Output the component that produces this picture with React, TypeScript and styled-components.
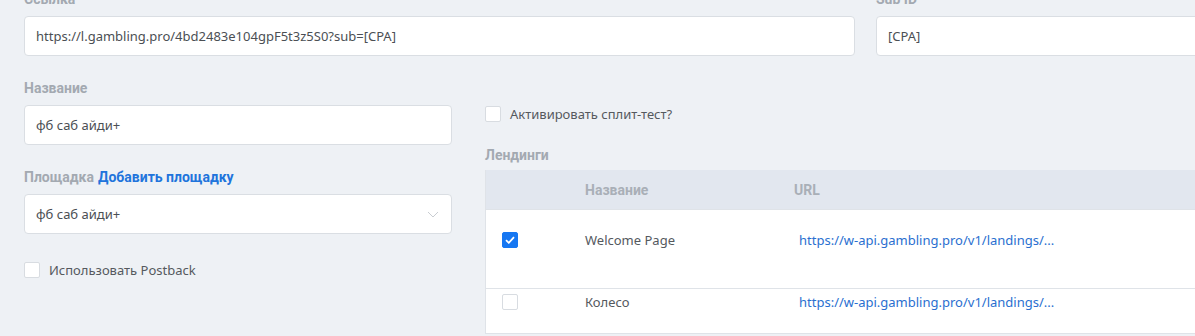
import React from 'react'
import styled, { createGlobalStyle } from 'styled-components'

const GlobalStyle = createGlobalStyle`
  html, body {
    margin: 0;
    padding: 0;
    background: #eef1f5;
    overflow: hidden;
  }
  body {
    font-family: 'Segoe UI', 'Noto Sans', 'Open Sans', sans-serif;
    color: #4b4f54;
  }
`

const Page = styled.div`
  width: 1260px;
  margin-top: -10px;
  padding-left: 24px;
  display: flex;
  flex-direction: column;
  gap: 23px;
`

const TopRow = styled.div`
  display: grid;
  grid-template-columns: 831px 360px;
  column-gap: 21px;
`

const Columns = styled.div`
  display: grid;
  grid-template-columns: 428px 760px;
  column-gap: 33px;
`

const Column = styled.div<{ $offset?: number }>`
  display: flex;
  flex-direction: column;
  padding-top: ${({ $offset }) => $offset || 0}px;
`

const Field = styled.div<{ $gap?: number }>`
  display: flex;
  flex-direction: column;
  margin-bottom: ${({ $gap }) => ($gap === undefined ? 23 : $gap)}px;
`

const Label = styled.div<{ $space?: number }>`
  font-family: Roboto, 'Liberation Sans', sans-serif;
  font-weight: 700;
  font-size: 14px;
  line-height: 18px;
  height: 18px;
  display: flex;
  gap: 4px;
  align-items: center;
  color: #a3a9b1;
  margin-bottom: ${({ $space }) => ($space === undefined ? 8 : $space)}px;
  white-space: nowrap;

  a {
    color: #2174dc;
    text-decoration: none;
  }
`

const Input = styled.div`
  box-sizing: border-box;
  height: 40px;
  background: #fff;
  border: 1px solid #dadee3;
  border-radius: 4px;
  display: flex;
  align-items: center;
  padding: 0 11px;
  font-size: 13px;
  color: #4b4f54;
  white-space: nowrap;
  overflow: hidden;
`

const Select = styled(Input)`
  justify-content: space-between;
  padding-right: 12px;
`

const CheckRow = styled.label`
  display: flex;
  align-items: center;
  gap: 9px;
  font-size: 13px;
  line-height: 18px;
  color: #55595e;
`

const Box = styled.span<{ $checked?: boolean }>`
  width: 16px;
  height: 16px;
  box-sizing: border-box;
  border-radius: 2px;
  flex: none;
  display: inline-flex;
  align-items: center;
  justify-content: center;
  background: ${({ $checked }) => ($checked ? '#1677f2' : '#fff')};
  border: 1px solid ${({ $checked }) => ($checked ? '#1677f2' : '#d8dce1')};
`

const Table = styled.div`
  margin-top: -2px;
  border-left: 1px solid #dfe3e8;
  background: #fff;
`

const Row = styled.div<{ $head?: boolean; $height: number; $top: number }>`
  display: grid;
  grid-template-columns: 83px 209px 1fr;
  align-items: start;
  box-sizing: border-box;
  height: ${({ $height }) => $height}px;
  padding: ${({ $top }) => $top}px 0 0 16px;
  background: ${({ $head }) => ($head ? '#e2e7ef' : '#fff')};
  border-bottom: 1px solid #dfe3e8;
  font-size: 13px;
  line-height: 16px;
`

const HeadCell = styled.div`
  font-family: Roboto, 'Liberation Sans', sans-serif;
  font-weight: 700;
  font-size: 14px;
  color: #a9afb7;
`

const Cell = styled.div`
  color: #55595e;
  white-space: nowrap;
`

const UrlCell = styled.a`
  color: #2a6fd0;
  text-decoration: none;
  white-space: nowrap;
  margin-left: 5px;
`

const Check = () => (
  <svg width="10" height="8" viewBox="0 0 10 8">
    <path d="M1 4.2 L3.8 6.8 L9 1.2" fill="none" stroke="#fff" strokeWidth="1.8" />
  </svg>
)

const Chevron = () => (
  <svg width="12" height="7" viewBox="0 0 12 7">
    <path d="M1 1 L6 6 L11 1" fill="none" stroke="#c9cdd2" strokeWidth="1" />
  </svg>
)

const landings = [
  { name: 'Welcome Page', url: 'https://w-api.gambling.pro/v1/landings/...', checked: true, height: 79, top: 22 },
  { name: 'Колесо', url: 'https://w-api.gambling.pro/v1/landings/...', checked: false, height: 45, top: 5 },
]

const App: React.FC = () => (
  <>
    <GlobalStyle />
    <Page>
      <TopRow>
        <Field $gap={0}>
          <Label>Ссылка</Label>
          <Input>https://l.gambling.pro/4bd2483e104gpF5t3z5S0?sub=[CPA]</Input>
        </Field>
        <Field $gap={0}>
          <Label>Sub ID</Label>
          <Input>[CPA]</Input>
        </Field>
      </TopRow>
      <Columns>
        <Column>
          <Field>
            <Label>Название</Label>
            <Input>фб саб айди+</Input>
          </Field>
          <Field $gap={27}>
            <Label>
              Площадка <a href="#">Добавить площадку</a>
            </Label>
            <Select>
              <span>фб саб айди+</span>
              <Chevron />
            </Select>
          </Field>
          <CheckRow>
            <Box />
            Использовать Postback
          </CheckRow>
        </Column>
        <Column $offset={26}>
          <Field $gap={23}>
            <CheckRow>
              <Box />
              Активировать сплит-тест?
            </CheckRow>
          </Field>
          <Label>Лендинги</Label>
          <Table>
            <Row $head $height={40} $top={12}>
              <span />
              <HeadCell>Название</HeadCell>
              <HeadCell>URL</HeadCell>
            </Row>
            {landings.map((l) => (
              <Row key={l.name} $height={l.height} $top={l.top}>
                <Box $checked={l.checked}>{l.checked && <Check />}</Box>
                <Cell>{l.name}</Cell>
                <UrlCell href="#">{l.url}</UrlCell>
              </Row>
            ))}
          </Table>
        </Column>
      </Columns>
    </Page>
  </>
)

export default App
